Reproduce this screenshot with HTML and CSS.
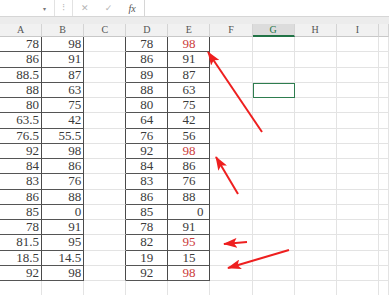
FILE: index.html
```html
<!DOCTYPE html>
<html lang="en">

<head>
  <meta charset="UTF-8">
  <title>Sheet</title>
  <link rel="stylesheet" href="styles.css">
</head>

<body>
  <div class="topbar">
    <div class="name-box"><span class="drop">&#9662;</span></div>
    <div class="sep">&#8285;</div>
    <div class="fx-buttons">
      <span class="btn">&#10005;</span>
      <span class="btn">&#10003;</span>
      <span class="btn fx">fx</span>
    </div>
    <div class="formula"></div>
  </div>
  <div class="band"></div>

  <div class="sheet">
    <div class="hd">A</div><div class="hd">B</div><div class="hd">C</div><div class="hd">D</div><div class="hd">E</div><div class="hd">F</div><div class="hd sel">G</div><div class="hd">H</div><div class="hd">I</div><div class="hd"></div>

    <div class="c t n">78</div><div class="c t n">98</div><div class="c e"></div><div class="c t m">78</div><div class="c t m r">98</div><div class="c"></div><div class="c"></div><div class="c"></div><div class="c"></div><div class="c"></div>
    <div class="c t n">86</div><div class="c t n">91</div><div class="c e"></div><div class="c t m">86</div><div class="c t m">91</div><div class="c"></div><div class="c"></div><div class="c"></div><div class="c"></div><div class="c"></div>
    <div class="c t n">88.5</div><div class="c t n">87</div><div class="c e"></div><div class="c t m">89</div><div class="c t m">87</div><div class="c"></div><div class="c"></div><div class="c"></div><div class="c"></div><div class="c"></div>
    <div class="c t n">88</div><div class="c t n">63</div><div class="c e"></div><div class="c t m">88</div><div class="c t m">63</div><div class="c"></div><div class="c active"></div><div class="c"></div><div class="c"></div><div class="c"></div>
    <div class="c t n">80</div><div class="c t n">75</div><div class="c e"></div><div class="c t m">80</div><div class="c t m">75</div><div class="c"></div><div class="c"></div><div class="c"></div><div class="c"></div><div class="c"></div>
    <div class="c t n">63.5</div><div class="c t n">42</div><div class="c e"></div><div class="c t m">64</div><div class="c t m">42</div><div class="c"></div><div class="c"></div><div class="c"></div><div class="c"></div><div class="c"></div>
    <div class="c t n">76.5</div><div class="c t n">55.5</div><div class="c e"></div><div class="c t m">76</div><div class="c t m">56</div><div class="c"></div><div class="c"></div><div class="c"></div><div class="c"></div><div class="c"></div>
    <div class="c t n">92</div><div class="c t n">98</div><div class="c e"></div><div class="c t m">92</div><div class="c t m r">98</div><div class="c"></div><div class="c"></div><div class="c"></div><div class="c"></div><div class="c"></div>
    <div class="c t n">84</div><div class="c t n">86</div><div class="c e"></div><div class="c t m">84</div><div class="c t m">86</div><div class="c"></div><div class="c"></div><div class="c"></div><div class="c"></div><div class="c"></div>
    <div class="c t n">83</div><div class="c t n">76</div><div class="c e"></div><div class="c t m">83</div><div class="c t m">76</div><div class="c"></div><div class="c"></div><div class="c"></div><div class="c"></div><div class="c"></div>
    <div class="c t n">86</div><div class="c t n">88</div><div class="c e"></div><div class="c t m">86</div><div class="c t m">88</div><div class="c"></div><div class="c"></div><div class="c"></div><div class="c"></div><div class="c"></div>
    <div class="c t n">85</div><div class="c t n">0</div><div class="c e"></div><div class="c t m">85</div><div class="c t n zero">0</div><div class="c"></div><div class="c"></div><div class="c"></div><div class="c"></div><div class="c"></div>
    <div class="c t n">78</div><div class="c t n">91</div><div class="c e"></div><div class="c t m">78</div><div class="c t m">91</div><div class="c"></div><div class="c"></div><div class="c"></div><div class="c"></div><div class="c"></div>
    <div class="c t n">81.5</div><div class="c t n">95</div><div class="c e"></div><div class="c t m">82</div><div class="c t m r">95</div><div class="c"></div><div class="c"></div><div class="c"></div><div class="c"></div><div class="c"></div>
    <div class="c t n">18.5</div><div class="c t n">14.5</div><div class="c e"></div><div class="c t m">19</div><div class="c t m">15</div><div class="c"></div><div class="c"></div><div class="c"></div><div class="c"></div><div class="c"></div>
    <div class="c t n">92</div><div class="c t n">98</div><div class="c e"></div><div class="c t m">92</div><div class="c t m r">98</div><div class="c"></div><div class="c"></div><div class="c"></div><div class="c"></div><div class="c"></div>
    <div class="c"></div><div class="c"></div><div class="c"></div><div class="c"></div><div class="c"></div><div class="c"></div><div class="c"></div><div class="c"></div><div class="c"></div><div class="c"></div>
  </div>

  <!-- red annotation arrows drawn over the sheet -->
  <svg class="arrows" width="389" height="295" viewBox="0 0 389 295">
    <defs>
      <marker id="head" viewBox="0 0 14 10" refX="13" refY="5" markerWidth="14" markerHeight="10" markerUnits="userSpaceOnUse" orient="auto">
        <path d="M0,0 L14,5 L0,10 L3,5 z" fill="#ee1f1f" />
      </marker>
    </defs>
    <line x1="262" y1="132" x2="208" y2="52" />
    <line x1="238" y1="194" x2="216" y2="157" />
    <line x1="247" y1="242" x2="224" y2="244" />
    <line x1="289" y1="250" x2="228" y2="268" />
  </svg>
</body>

</html>
```

FILE: styles.css
```css
body {
  margin: 0;
  width: 389px;
  height: 295px;
  overflow: hidden;
  background-color: #fff;
  font-family: "Liberation Serif", serif;
  position: relative;
}

.topbar {
  display: flex;
  height: 16px;
  border-bottom: 1px solid #d6d6d6;
  background-color: #fff;
}

.name-box {
  width: 55px;
  display: flex;
  justify-content: flex-end;
  align-items: center;
  padding-right: 8px;
  box-sizing: border-box;
  border-right: 1px solid #e2e2e2;
}

.drop {
  font-family: "DejaVu Sans", sans-serif;
  font-size: 6px;
  color: #777;
}

.sep {
  width: 17px;
  text-align: center;
  font-family: "DejaVu Sans", sans-serif;
  font-size: 10px;
  line-height: 16px;
  color: #bbb;
}

.fx-buttons {
  width: 73px;
  display: flex;
  align-items: center;
  border-left: 1px solid #e2e2e2;
  border-right: 1px solid #d6d6d6;
  box-sizing: border-box;
}

.btn {
  width: 24px;
  text-align: center;
  font-family: "DejaVu Sans", sans-serif;
  font-size: 9px;
  color: #b5b5b5;
}

.fx {
  font-family: "Liberation Serif", serif;
  font-style: italic;
  font-size: 10px;
  color: #555;
}

.formula {
  flex: 1;
}

.band {
  height: 7px;
  background-color: #ececec;
}

.sheet {
  display: grid;
  grid-template-columns: repeat(9, 42.1px) 10px;
  grid-template-rows: 13px repeat(17, 15.25px);
}

.hd {
  background-color: #f1f1f1;
  border-right: 1px solid #d4d4d4;
  border-bottom: 1px solid #c8c8c8;
  box-sizing: border-box;
  text-align: center;
  font-size: 10px;
  line-height: 12px;
  color: #555;
}

.hd.sel {
  background-color: #dcdcdc;
  border-bottom: 2px solid #217346;
  color: #217346;
}

.c {
  border-right: 1px solid #e3e3e3;
  border-bottom: 1px solid #e3e3e3;
  box-sizing: border-box;
  font-size: 13px;
  line-height: 14px;
  color: #3a3a3a;
  overflow: hidden;
}

.t {
  border-right-color: #4a4a4a;
  border-bottom-color: #555;
}

.e {
  border-right-color: #4a4a4a;
}

.n {
  text-align: right;
  padding-right: 2px;
}

.n.zero {
  padding-right: 6px;
}

.m {
  text-align: center;
}

.r {
  color: #cc3b3b;
}

.active {
  border: 1.5px solid #2e7d4f;
}

.arrows {
  position: absolute;
  left: 0;
  top: 0;
  pointer-events: none;
}

.arrows line {
  stroke: #ee1f1f;
  stroke-width: 2;
  marker-end: url(#head);
}
```
